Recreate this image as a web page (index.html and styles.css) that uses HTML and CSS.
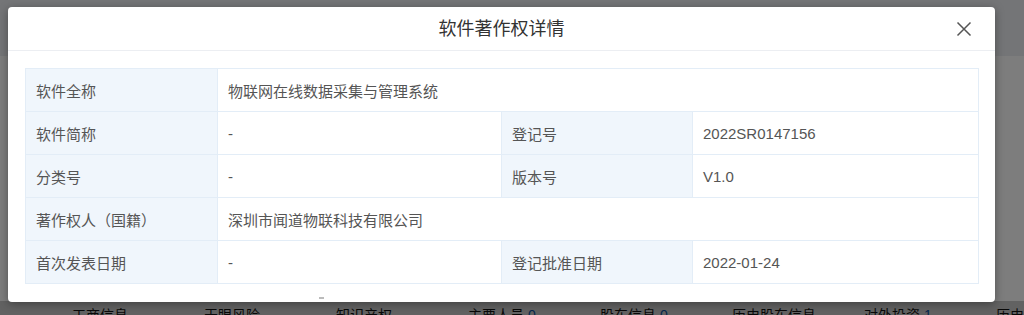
FILE: index.html
```html
<!DOCTYPE html>
<html lang="zh-CN">
<head>
<meta charset="utf-8">
<title>软件著作权详情</title>
<link rel="stylesheet" href="styles.css">
</head>
<body>
<div class="page">
  <div class="page-head"></div>
  <div class="page-body"></div>
  <nav class="tabs">
    <span class="tab">工商信息</span>
    <span class="tab">天眼风险</span>
    <span class="tab">知识产权</span>
    <span class="tab">主要人员 <b>0</b></span>
    <span class="tab">股东信息 <b>0</b></span>
    <span class="tab">历史股东信息</span>
    <span class="tab">对外投资 <b>1</b></span>
    <span class="tab">历史对外投资</span>
  </nav>
</div>
<div class="mask"></div>
<div class="modal">
  <header class="modal-head">
    <h1 class="modal-title">软件著作权详情</h1>
    <button class="modal-close" aria-label="关闭">
      <svg width="16" height="16" viewBox="0 0 16 16"><path d="M1.5 1.5L14.5 14.5M14.5 1.5L1.5 14.5" stroke="#555" stroke-width="1.5" fill="none"/></svg>
    </button>
  </header>
  <div class="modal-body">
    <table class="detail">
      <colgroup>
        <col class="c-label1"><col class="c-val1"><col class="c-label2"><col class="c-val2">
      </colgroup>
      <tr><th>软件全称</th><td colspan="3">物联网在线数据采集与管理系统</td></tr>
      <tr><th>软件简称</th><td>-</td><th>登记号</th><td>2022SR0147156</td></tr>
      <tr><th>分类号</th><td>-</td><th>版本号</th><td>V1.0</td></tr>
      <tr><th>著作权人（国籍）</th><td colspan="3">深圳市闻道物联科技有限公司</td></tr>
      <tr><th>首次发表日期</th><td>-</td><th>登记批准日期</th><td>2022-01-24</td></tr>
    </table>
    <div class="foot-dash"></div>
  </div>
</div>
</body>
</html>
```
FILE: styles.css
```css
* { box-sizing: border-box; }
html, body { margin: 0; padding: 0; }
body {
  width: 1024px;
  height: 315px;
  overflow: hidden;
  font-family: "Liberation Sans", "Noto Sans CJK SC", sans-serif;
  background: #f4f5f7;
  position: relative;
}
.page { height: 315px; display: flex; flex-direction: column; }
.page-head { height: 56px; background: #e8eaee; }
.page-body { flex: 1; background: #fafafa; }
.tabs {
  height: 14px;
  display: flex;
  padding-left: 72px;
  background: #c4c4c4;
  overflow: hidden;
}
.tab {
  flex: none;
  width: 132px;
  font-size: 14px;
  line-height: 20px;
  margin-top: 4px;
  color: #111;
  white-space: nowrap;
}
.tab b { font-weight: normal; color: #0b4f9a; }
.mask {
  position: absolute;
  inset: 0;
  background: rgba(0, 0, 0, 0.5);
}
.modal {
  position: absolute;
  left: 8px;
  top: 7px;
  width: 987px;
  height: 295px;
  background: #fff;
  border-radius: 4px;
  box-shadow: 0 2px 10px rgba(0, 0, 0, 0.35);
  display: flex;
  flex-direction: column;
}
.modal-head {
  height: 44px;
  border-bottom: 1px solid #eceef2;
  display: flex;
  align-items: center;
  justify-content: center;
  position: relative;
}
.modal-title {
  margin: 0;
  font-size: 18px;
  font-weight: normal;
  color: #333;
  line-height: 24px;
}
.modal-close {
  position: absolute;
  right: 22px;
  top: 13px;
  width: 18px;
  height: 18px;
  padding: 1px;
  border: 0;
  background: none;
  display: flex;
  align-items: center;
  justify-content: center;
}
.modal-body {
  padding: 17px 17px 0 17px;
  position: relative;
  flex: 1;
}
.detail {
  width: 953px;
  border-collapse: collapse;
  table-layout: fixed;
  font-size: 15px;
  color: #555;
}
.c-label1 { width: 192px; }
.c-val1 { width: 284px; }
.c-label2 { width: 191px; }
.c-val2 { width: 286px; }
.detail th, .detail td {
  height: 43px;
  border: 1px solid #e3edf7;
  padding: 0 10px;
  text-align: left;
  font-weight: normal;
  white-space: nowrap;
}
.detail th { background: #f0f6fc; }
.detail td { background: #fff; }
.foot-dash {
  position: absolute;
  left: 311px;
  bottom: 3px;
  width: 5px;
  height: 2px;
  background: #bbb;
}
```
